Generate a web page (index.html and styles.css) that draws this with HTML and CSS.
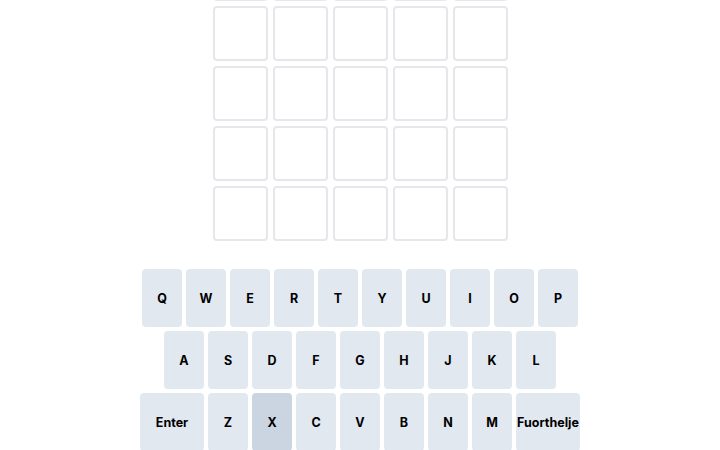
FILE: index.html
```html
<!DOCTYPE html>
<html lang="fy">
<head>
    <meta charset="UTF-8">
    <meta name="viewport" content="width=device-width, initial-scale=1.0">
    <title>Wurdle</title>
    <link rel="stylesheet" href="styles.css">
</head>
<body>
    <div class="board">
        <div class="row"><div class="tile"></div><div class="tile"></div><div class="tile"></div><div class="tile"></div><div class="tile"></div></div>
        <div class="row"><div class="tile"></div><div class="tile"></div><div class="tile"></div><div class="tile"></div><div class="tile"></div></div>
        <div class="row"><div class="tile"></div><div class="tile"></div><div class="tile"></div><div class="tile"></div><div class="tile"></div></div>
        <div class="row"><div class="tile"></div><div class="tile"></div><div class="tile"></div><div class="tile"></div><div class="tile"></div></div>
        <div class="row"><div class="tile"></div><div class="tile"></div><div class="tile"></div><div class="tile"></div><div class="tile"></div></div>
        <div class="row"><div class="tile"></div><div class="tile"></div><div class="tile"></div><div class="tile"></div><div class="tile"></div></div>
    </div>
    <div class="keyboard">
        <div class="keys">
            <button class="key">Q</button><button class="key">W</button><button class="key">E</button><button class="key">R</button><button class="key">T</button><button class="key">Y</button><button class="key">U</button><button class="key">I</button><button class="key">O</button><button class="key">P</button>
        </div>
        <div class="keys">
            <button class="key">A</button><button class="key">S</button><button class="key">D</button><button class="key">F</button><button class="key">G</button><button class="key">H</button><button class="key">J</button><button class="key">K</button><button class="key">L</button>
        </div>
        <div class="keys">
            <button class="key wide">Enter</button><button class="key">Z</button><button class="key active">X</button><button class="key">C</button><button class="key">V</button><button class="key">B</button><button class="key">N</button><button class="key">M</button><button class="key wide">Fuorthelje</button>
        </div>
    </div>
</body>
</html>
```

FILE: styles.css
```css
body {
    margin: 0;
    background-color: #fff;
    font-family: Inter, "Liberation Sans", Arial, sans-serif;
    overflow: hidden;
}
.board {
    display: flex;
    flex-direction: column;
    align-items: center;
    gap: 5px;
    margin-top: -114px;
}
.row {
    display: flex;
    gap: 5px;
}
.tile {
    box-sizing: border-box;
    width: 55px;
    height: 55px;
    border: 2px solid #e5e7eb;
    border-radius: 4px;
}
.keyboard {
    display: flex;
    flex-direction: column;
    align-items: center;
    gap: 4px;
    margin-top: 28px;
}
.keys {
    display: flex;
    gap: 4px;
}
.key {
    width: 40px;
    height: 58px;
    padding: 0;
    border: none;
    border-radius: 4px;
    background-color: #e2e8f0;
    color: #000;
    font-family: inherit;
    font-size: 12.5px;
    font-weight: 700;
    cursor: pointer;
}
.key.wide {
    width: 64px;
}
.key.active {
    background-color: #cbd5e1;
}
```
